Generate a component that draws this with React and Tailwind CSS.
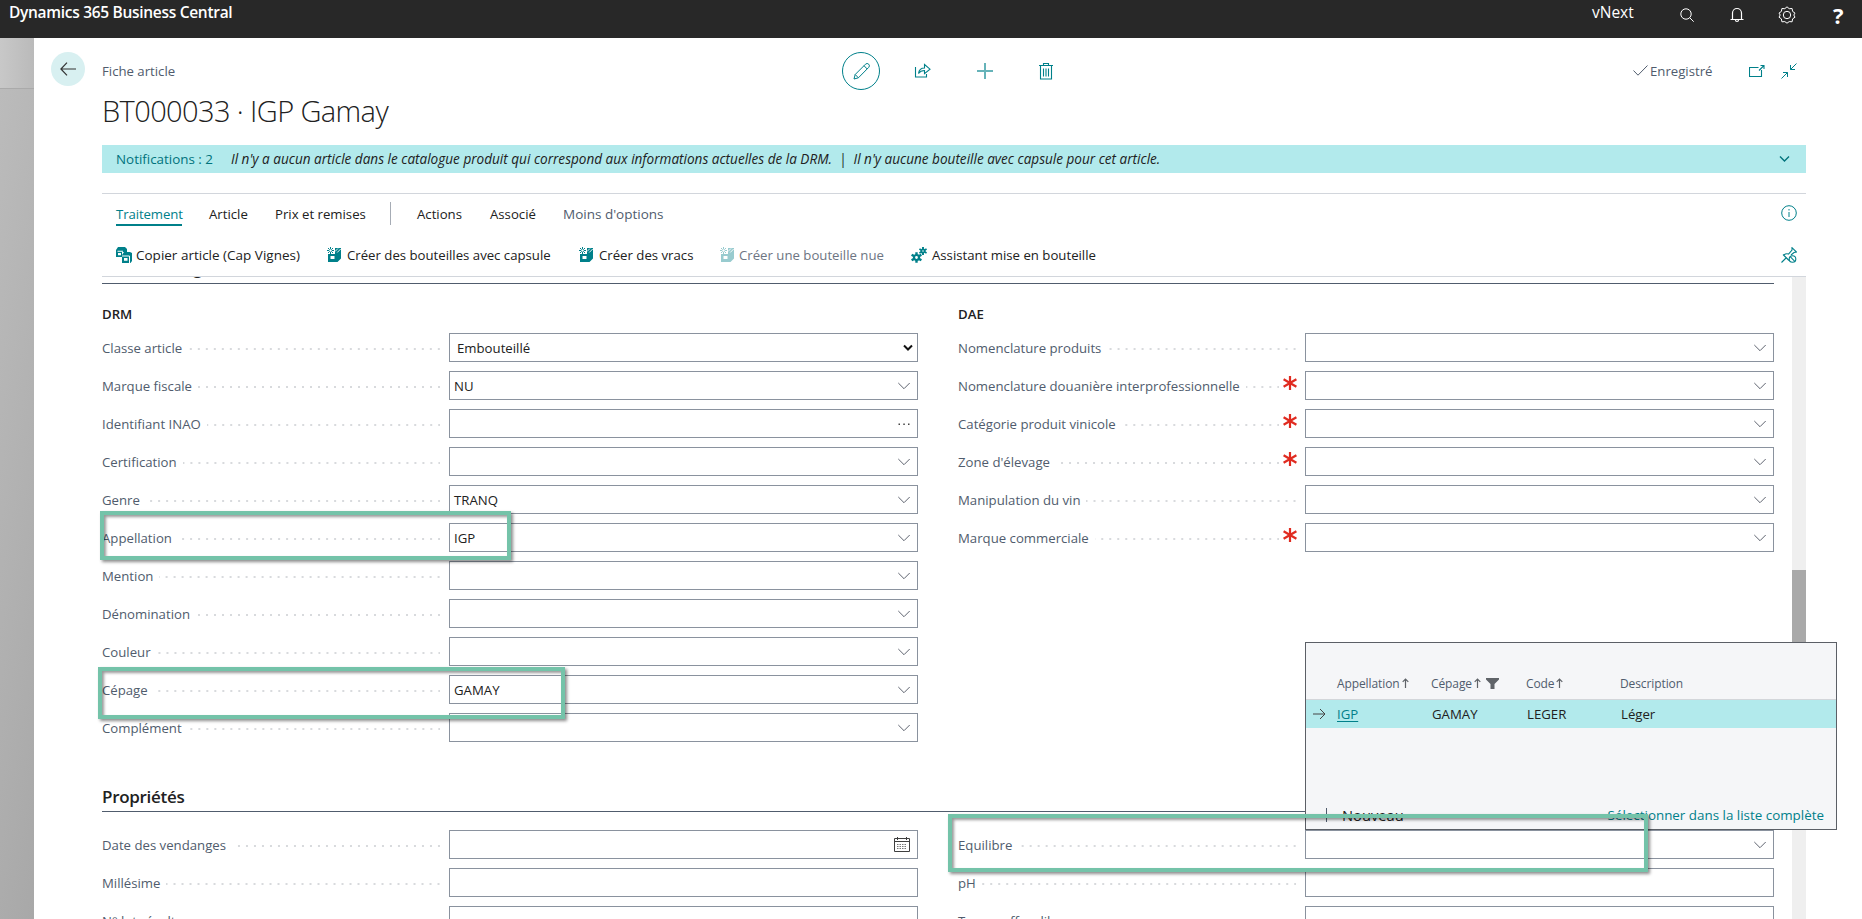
const dots =
  "bg-[linear-gradient(90deg,transparent_6px,#d8dadd_6px)] bg-[length:8px_2px] bg-repeat-x bg-right h-0.5 flex-1 mt-[3px]";

function Chevron({ className = "" }) {
  return (
    <svg width="14" height="14" viewBox="0 0 14 14" fill="none" stroke="#5f6470" strokeWidth="1" className={className}>
      <path d="M1.3 4 7 9.7 12.7 4" />
    </svg>
  );
}

function Star() {
  return (
    <svg width="14" height="14" viewBox="0 0 14 14" stroke="#e02b20" strokeWidth="2.2" className="-mr-px -mt-[6px] ml-1 shrink-0">
      <path d="M7 0v14M.6 3.2l12.8 7.6M13.4 3.2.6 10.8" />
    </svg>
  );
}

function CalendarIcon() {
  return (
    <svg width="16" height="15" viewBox="0 0 16 15" fill="none" stroke="#3f3f3f">
      <path d="M.5 1.5h15v13H.5zM.5 4.5h15M3.5 0v3M12.5 0v3" />
      <path d="M3 7.5h10M3 9.5h10M3 11.5h10" strokeDasharray="1.5 1" stroke="#777" />
    </svg>
  );
}

function BoxIcon({ faded }) {
  return (
    <svg width="14" height="15" viewBox="0 0 14 15" className={faded ? "opacity-40" : ""}>
      <path fill="#00808a" d="M8 1h6v10.500L10.500 15H1V7h7z" />
      <path fill="#fff" d="M3.500 9h4v3h-4z" />
      <path stroke="#fff" d="M10.200 5.500 13.700 2M8 4.500 11 1.500" fill="none" strokeWidth=".9" />
      <path stroke="#00808a" d="M3.500 0v7M0 3.500h7M1 1l5 5M6 1 1 6" />
      <circle cx="3.500" cy="3.500" r="1.200" fill="#fff" />
    </svg>
  );
}

function CopyIcon() {
  return (
    <svg width="16" height="16" viewBox="0 0 16 16">
      <path fill="#00808a" d="M2 0h7l2 2v3H6v5H0V3z" />
      <path fill="#fff" d="M1.500 3.800H7v.9H1.500zM2 6h3v2.200H2z" />
      <path fill="#00808a" d="M8 5h6l2 1v8l-1.500 2H6V8z" />
      <path fill="#fff" d="M6 8.500h7.500v1H6zM8 11h3.500v2.800H8zM13 9h1v7h-1z" />
    </svg>
  );
}

function GearsIcon() {
  return (
    <svg width="16" height="16" viewBox="0 0 16 16" fill="none" stroke="#00808a">
      <circle cx="5.500" cy="10.500" r="2.500" strokeWidth="2.2" />
      <path strokeWidth="2.400" d="M5.500 5.200V8M5.500 13v2.800M.6 7.700l2.500 1.400M7.900 11.900l2.500 1.400M.6 13.300l2.500-1.400M7.900 9.100l2.500-1.400" />
      <circle cx="12" cy="4" r="1.700" strokeWidth="1.800" />
      <path strokeWidth="1.900" d="M12 0v2.200M12 5.800V8M8.400 2l1.900 1M13.700 5l1.900 1M8.400 6l1.900-1M13.700 3l1.900-1" />
    </svg>
  );
}

function Field({ label, value, kind = "lookup", required }) {
  return (
    <div className="flex h-[29px] items-center">
      <div className="flex w-[347px] items-center pr-[9px]">
        <span className="mr-[6px] whitespace-nowrap text-[#505c6d]">{label}</span>
        <span className={dots} />
        {required && <Star />}
      </div>
      <div
        className={
          "flex h-[29px] w-[469px] items-center justify-between border border-[#8a929e] bg-white pl-[4px] text-[#212121] " +
          (kind === "date" ? "pr-[7px]" : "pr-[6px]")
        }
      >
        <span className={kind === "select" ? "pl-[3px]" : ""}>{value}</span>
        {kind === "lookup" && <Chevron />}
        {kind === "date" && <CalendarIcon />}
        {kind === "select" && (
          <svg width="10" height="8" viewBox="0 0 10 8" fill="none" stroke="#111" strokeWidth="2" className="-mr-[2px]">
            <path d="M1 1.500 5 5.500 9 1.500" />
          </svg>
        )}
        {kind === "more" && (
          <svg width="14" height="4" viewBox="0 0 14 4" fill="#444">
            <path d="M1.500 1.500h1.500v1.500H1.500zM6.300 1.500h1.500v1.500H6.300zM11 1.500h1.500v1.500H11z" />
          </svg>
        )}
      </div>
    </div>
  );
}

const drm = [
  { label: "Classe article", value: "Embouteillé", kind: "select" },
  { label: "Marque fiscale", value: "NU" },
  { label: "Identifiant INAO", kind: "more" },
  { label: "Certification" },
  { label: "Genre", value: "TRANQ" },
  { label: "Appellation", value: "IGP" },
  { label: "Mention" },
  { label: "Dénomination" },
  { label: "Couleur" },
  { label: "Cépage", value: "GAMAY" },
  { label: "Complément" },
];

const dae = [
  { label: "Nomenclature produits" },
  { label: "Nomenclature douanière interprofessionnelle", required: true },
  { label: "Catégorie produit vinicole", required: true },
  { label: "Zone d'élevage", required: true },
  { label: "Manipulation du vin" },
  { label: "Marque commerciale", required: true },
];

const propsLeft = [
  { label: "Date des vendanges", kind: "date" },
  { label: "Millésime", kind: "text" },
  { label: "N° lot récolte", kind: "text" },
];

const propsRight = [
  { label: "Equilibre" },
  { label: "pH", kind: "text" },
  { label: "Temps effor dilu.", kind: "text" },
];

function Fields({ items }) {
  return (
    <div className="flex w-[816px] flex-col gap-[9px]">
      {items.map((f) => (
        <Field key={f.label} {...f} />
      ))}
    </div>
  );
}

function TopBar() {
  return (
    <header className="flex h-[38px] items-start bg-[#282828] text-white">
      <span className="ml-[9px] w-[1583px] text-[15.5px] font-semibold leading-6 tracking-[-0.3px]">Dynamics 365 Business Central</span>
      <span className="w-[88px] text-[15.5px] leading-6">vNext</span>
      <svg width="14" height="14" viewBox="0 0 14 14" fill="none" stroke="#fff" className="mt-2">
        <circle cx="6" cy="6" r="5.200" />
        <path d="m9.700 9.700 4 4" />
      </svg>
      <svg width="14" height="16" viewBox="0 0 14 16" fill="none" stroke="#fff" strokeWidth="1.200" className="ml-[36px] mt-[7px]">
        <path d="M2.500 12.500V6a4.500 4.500 0 0 1 9 0v6.500M.5 12.500h13M5.500 13a1.500 1.500 0 0 0 3 0" />
      </svg>
      <svg width="18" height="18" viewBox="0 0 18 18" fill="none" stroke="#fff" className="ml-[34px] mt-[6px]">
        <path d="m9 .8 2.200 1.900 2.900-.2.500 2.900 2.400 1.700L15.800 9l1.200 2.200-2.400 1.700-.5 2.900-2.900-.2L9 17.200l-2.200-1.600-2.900.2-.5-2.900L1 11.200 2.200 9 1 7.100l2.400-1.700.5-2.900 2.900.2z" />
        <circle cx="9" cy="9" r="3.700" />
      </svg>
      <span className="ml-[37px] mt-[3px] text-[22px] font-bold leading-6">?</span>
    </header>
  );
}

function PageHeader() {
  return (
    <div className="flex h-[48px] items-center pl-[17px]">
      <div className="-mt-[4px] flex size-[34px] items-center justify-center rounded-full bg-[#d8f0f1]">
        <svg width="16" height="14" viewBox="0 0 16 14" fill="none" stroke="#333" strokeWidth="1.200">
          <path d="M16 7H1M7 .7.900 7 7 13.300" />
        </svg>
      </div>
      <span className="ml-[17px] w-[740px] text-[#505c6d]">Fiche article</span>
      <div className="flex size-[38px] items-center justify-center rounded-full border border-[#00808a]">
        <svg width="17" height="17" viewBox="0 0 17 17" fill="none" stroke="#00808a">
          <path d="m1 16 1.200-4.500L12.500 1.200a1.700 1.700 0 0 1 3.200 3.200L5.400 14.800zM2.200 11.500l3.200 3.300M11 2.700 14.200 6" />
        </svg>
      </div>
      <svg width="17" height="15" viewBox="0 0 17 15" fill="none" stroke="#00808a" strokeWidth="1.100" className="-mt-[2px] ml-[34px]">
        <path d="M1.500 4v10h11v-3M4.500 10.500c.5-3.500 2.500-5.500 6-5.500V1.500l5.500 4.700-5.500 4.500V7.500c-2.500 0-4.500.8-6 3z" />
      </svg>
      <svg width="16" height="16" viewBox="0 0 16 16" fill="none" stroke="#66b3b9" strokeWidth="2" className="ml-[46px]">
        <path d="M8 0v16M0 8h16" />
      </svg>
      <svg width="14" height="17" viewBox="0 0 14 17" fill="none" stroke="#00808a" strokeWidth="1.100" className="ml-[46px]">
        <path d="M0 2.500h14M4.500 2.500v-2h5v2M1.500 3v13h11V3M4.500 5.500v8M7 5.500v8M9.500 5.500v8" />
      </svg>
      <svg width="15" height="11" viewBox="0 0 15 11" fill="none" stroke="#505c6d" className="ml-[580px] -mt-[1px]">
        <path d="m.5 5.500 4.500 4.700L14.500.5" />
      </svg>
      <span className="ml-[2px] w-[99px] text-[#505c6d]">Enregistré</span>
      <svg width="16" height="12" viewBox="0 0 16 12" fill="none" stroke="#00808a" strokeWidth="1.100">
        <path d="M9.500 2.500h-9v9h12V5M10 5.500 15 .5M11.500.5H15V4" />
      </svg>
      <svg width="16" height="16" viewBox="0 0 16 16" fill="none" stroke="#00808a" className="ml-[16px]">
        <path d="M15.500.500 9.500 6.500M9.500 2v4.500H14M.5 15.500l6-6M2 9.500h4.500V14" />
      </svg>
    </div>
  );
}

function SortArrow() {
  return (
    <svg width="7" height="10" viewBox="0 0 7 10" fill="none" stroke="#5f6368" strokeWidth="1.200" className="-ml-[1px] -mt-[4px] inline">
      <path d="M3.500 10V1M.7 3.800 3.500 1l2.800 2.800" />
    </svg>
  );
}

function Lookup() {
  return (
    <div className="absolute left-[1305px] top-[642px] flex h-[188px] w-[532px] flex-col border border-[#5b5f66] bg-[#f5f6f8]">
      <div className="flex h-[57px] items-end border-b border-[#d3d6da] pb-[5px] pl-[31px] text-[12px] tracking-[-0.1px] text-[#505c6d]">
        <span className="w-[94px]">Appellation <SortArrow /></span>
        <span className="w-[95px]">
          Cépage <SortArrow />
          <svg width="13" height="11" viewBox="0 0 13 11" fill="#5f6368" className="-mt-[3px] ml-[5px] inline">
            <path d="M0 0h13v1.500L8.500 6v5h-4V6L0 1.500z" />
          </svg>
        </span>
        <span className="w-[94px]">Code <SortArrow /></span>
        <span>Description</span>
      </div>
      <div className="flex h-[28px] items-center bg-[#b2eaec] pl-[7px] text-[#212121]">
        <svg width="13" height="12" viewBox="0 0 13 12" fill="none" stroke="#444">
          <path d="M0 6h12M7 1l5 5-5 5" />
        </svg>
        <span className="ml-[11px] w-[95px] text-[#00808a] underline underline-offset-2">IGP</span>
        <span className="w-[95px]">GAMAY</span>
        <span className="w-[94px]">LEGER</span>
        <span>Léger</span>
      </div>
      <div className="mt-auto flex h-[28px] items-center pl-[20px] pr-[12px]">
        <span className="h-[14px] w-px bg-[#505c6d]" />
        <span className="ml-[15px] text-[14.7px] text-[#212121]">Nouveau</span>
        <span className="ml-auto text-[13.4px] text-[#00808a]">Sélectionner dans la liste complète</span>
      </div>
    </div>
  );
}

// green annotation frames drawn over the form
const frame =
  "absolute border-4 border-[#74c3a9] shadow-[2px_2px_3px_rgba(0,0,0,.45),inset_2px_2px_3px_rgba(0,0,0,.4)]";

export default function App() {
  return (
    <div className="relative h-[919px] w-[1862px] overflow-hidden bg-white font-['Open_Sans','Noto_Sans',sans-serif] text-[13.2px] leading-5 text-[#212121]">
      <TopBar />
      <div className="flex h-[881px]">
        <aside className="w-[34px] shrink-0 bg-[linear-gradient(100deg,#bcbcbc,#a8a8a8)]">
          <div className="h-[51px] border-b border-[#aaa] bg-[linear-gradient(90deg,#c8c8c8,#bababa)]" />
        </aside>
        <main className="flex-1">
          <div className="pt-[9px]">
            <PageHeader />
          </div>
          <div className="flex w-[1772px] flex-col pl-[68px]">
            <h1 className="-mt-[4px] h-[54px] text-[29px] font-light leading-[40px] tracking-[-0.6px]">BT000033 · IGP Gamay</h1>
            <div className="flex h-[28px] items-center bg-[#b2eaec] pl-[14px] pr-[16px]">
              <span className="w-[115px] text-[13.4px] text-[#00737c]">Notifications : 2</span>
              <span className="text-[13.57px] italic">
                Il n'y a aucun article dans le catalogue produit qui correspond aux informations actuelles de la DRM. &nbsp;|&nbsp; Il n'y aucune bouteille avec capsule pour cet article.
              </span>
              <svg width="11" height="8" viewBox="0 0 11 8" fill="none" stroke="#00737c" strokeWidth="1.400" className="ml-auto">
                <path d="m1 1.500 4.500 4.500L10 1.500" />
              </svg>
            </div>
            <div className="mt-[20px] flex h-[83px] flex-col border-t border-[#d2d6dc] pl-[14px]">
              <nav className="flex h-[39px] items-center">
                <span className="mt-[2px] w-[93px] text-[#00808a]">
                  <span className="inline-block w-[66px] whitespace-nowrap border-b-2 border-[#00808a] tracking-[-0.1px]">Traitement</span>
                </span>
                <span className="w-[66px]">Article</span>
                <span className="w-[115px]">Prix et remises</span>
                <span className="w-[27px] self-center"><span className="block h-[23px] w-px bg-[#a6acb5]" /></span>
                <span className="w-[73px]">Actions</span>
                <span className="w-[73px]">Associé</span>
                <span className="text-[13.5px] text-[#505c6d]">Moins d'options</span>
                <svg width="16" height="16" viewBox="0 0 16 16" fill="none" stroke="#00808a" className="-mt-[2px] ml-auto mr-[9px]">
                  <circle cx="8" cy="8" r="7.300" />
                  <path d="M8 7v5M8 4v1.500" />
                </svg>
              </nav>
              <div className="flex flex-1 items-center">
                <div className="flex w-[211px] items-center gap-1 text-[13.5px]"><CopyIcon />Copier article (Cap Vignes)</div>
                <div className="flex w-[252px] items-center gap-[6px]"><BoxIcon />Créer des bouteilles avec capsule</div>
                <div className="flex w-[141px] items-center gap-[6px]"><BoxIcon />Créer des vracs</div>
                <div className="flex w-[191px] items-center gap-[5px] text-[#6d7583]"><BoxIcon faded />Créer une bouteille nue</div>
                <div className="flex items-center gap-[5px]"><GearsIcon />Assistant mise en bouteille</div>
                <svg width="16" height="16" viewBox="0 0 16 16" fill="none" stroke="#00808a" strokeWidth="1.100" className="ml-auto mr-[9px]">
                  <path d="M.5 15.500 5 11M2 7.500l6 6M3 8c1.500-1.500 3-1.500 4.500-1L11 3V.7L15.500 5 13 5.500 10 8" />
                  <circle cx="11.500" cy="12" r="3.300" />
                  <path d="m9.200 9.700 4.600 4.600" />
                </svg>
              </div>
            </div>
            <div className="flex h-[643px] justify-between overflow-hidden border-t border-[#d2d6dc]">
              <div className="w-[1672px] shrink-0">
                <h2 className="-mt-[22px] h-[29px] border-b border-[#505c6d] text-[16.5px] font-semibold leading-[25px] tracking-[-0.2px]">DRM Catalogue</h2>
                <div className="flex justify-between pt-[20px]">
                  <div>
                    <h3 className="mb-[9px] font-semibold">DRM</h3>
                    <Fields items={drm} />
                  </div>
                  <div>
                    <h3 className="mb-[9px] font-semibold">DAE</h3>
                    <Fields items={dae} />
                  </div>
                </div>
                <h2 className="mt-[40px] h-[30px] border-b border-[#505c6d] text-[17px] font-semibold leading-[29px] tracking-[-0.3px]">Propriétés</h2>
                <div className="flex justify-between pt-[18px]">
                  <Fields items={propsLeft} />
                  <Fields items={propsRight} />
                </div>
              </div>
              <div className="w-[14px] bg-[#efefef] pt-[293px]">
                <div className="h-[90px] bg-[#a9a9a9]" />
              </div>
            </div>
          </div>
        </main>
      </div>
      <Lookup />
      <div className={frame + " left-[100px] top-[511px] h-[49px] w-[411px]"} />
      <div className={frame + " left-[98px] top-[667px] h-[52px] w-[467px]"} />
      <div className={frame + " left-[948px] top-[814px] h-[58px] w-[700px]"} />
    </div>
  );
}
